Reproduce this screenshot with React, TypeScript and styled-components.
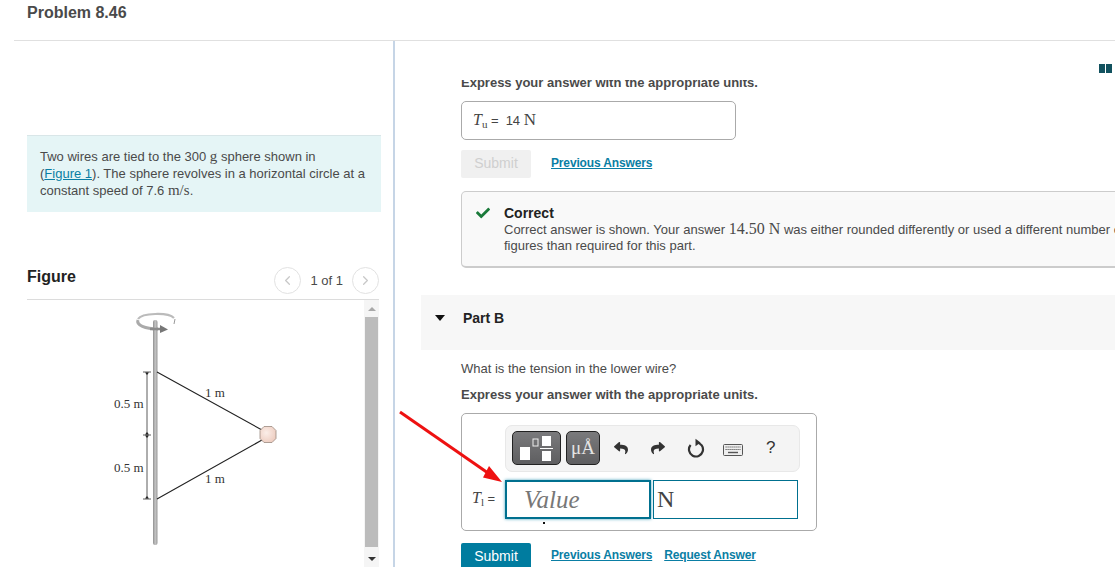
import React from 'react';
import styled, { createGlobalStyle } from 'styled-components';
import { FaCheck, FaReply, FaShare } from 'react-icons/fa';
import { ChevronLeft, ChevronRight } from 'lucide-react';

const Global = createGlobalStyle`
  html, body { margin: 0; padding: 0; height: 100%; background: #fff; overflow: hidden; }
  body { font-family: "Liberation Sans", Arial, sans-serif; color: #333; }
  #root { height: 100%; }
`;

const Page = styled.div`
  position: relative; width: 1115px; height: 567px; overflow: hidden; display: flex; flex-direction: column;
`;
const Header = styled.header`
  height: 40px; margin-left: 14px; padding-left: 13px; border-bottom: 1px solid #e0e0e0; flex: none;
`;
const Title = styled.h1`
  margin: 0; padding-top: 4px; font-size: 16px; line-height: 18px; font-weight: 700; color: #4a4a4a;
`;
const Body = styled.div`
  flex: 1; min-height: 0; display: grid; grid-template-columns: 395px 1fr;
`;
const Left = styled.section`
  border-right: 2px solid #c6d5e6; padding: 94px 13px 0 27px; display: flex; flex-direction: column; min-height: 0; overflow: hidden;
`;
const Statement = styled.div`
  background: #e5f5f6; border-top: 1px solid #d9e6e8; height: 77px; width: 354px; box-sizing: border-box; margin-right: -2px;
  padding: 12px 13px 0; font-size: 13px; line-height: 16.7px; color: #4a4a4a; flex: none;
`;
const Mathy = styled.span`
  font-family: "Liberation Serif", serif; font-size: ${p => p.$size || 15}px;
`;
const Ital = styled.i`
  font-family: "Liberation Serif", serif; font-size: ${p => p.$size || 16}px;
`;
const Sub = styled.sub`
  font-family: "Liberation Serif", serif; font-size: 11px; line-height: 0; vertical-align: -3px;
`;
const Link = styled.a`
  color: #0a7ea4; text-decoration: underline;
`;
const FigureHead = styled.div`
  display: flex; align-items: center; justify-content: space-between; height: 33px; margin-top: 54px; flex: none;
  border-bottom: 1px solid #dcdcdc; width: 352px;
`;
const FigureTitle = styled.h2`
  margin: -11px 0 0; font-size: 16px; font-weight: 700; color: #222;
`;
const Pager = styled.div`
  display: flex; align-items: center; gap: 9px; font-size: 13px; color: #4a4a4a; margin-top: -5px;
`;
const PagerButton = styled.span`
  width: 25px; height: 25px; border: 1px solid #e2e2e2; border-radius: 50%; display: flex; align-items: center; justify-content: center; color: #c8c8c8;
`;
const FigureArea = styled.div`
  flex: 1; min-height: 0; display: flex; width: 352px;
`;
const FigureCanvas = styled.svg`
  width: 337px; height: 267px; flex: none; display: block;
`;
const Scrollbar = styled.div`
  width: 15px; background: #f5f5f5; display: flex; flex-direction: column; align-items: center; flex: none;
`;
const ScrollArrow = styled.span`
  height: 17px; flex: none; display: flex; align-items: center; justify-content: center;
  &::before {
    content: ""; width: 0; height: 0; border-left: 4px solid transparent; border-right: 4px solid transparent;
    ${p => p.$down ? 'border-top: 4px solid #333;' : 'border-bottom: 4px solid #a8a8a8;'}
  }
`;
const ScrollThumb = styled.div`
  flex: 1; width: 13px; background: #bcbcbc; margin-bottom: 3px;
`;
const Right = styled.section`
  min-width: 0; display: flex; flex-direction: column; overflow: hidden;
`;
const TopStrip = styled.div`
  height: 39px; flex: none; display: flex; justify-content: flex-end; align-items: flex-start; padding: 23px 3px 0 0; box-sizing: border-box;
`;
const Scroller = styled.div`
  flex: 1; min-height: 0; overflow: hidden; padding-left: 26px;
`;
const Hint = styled.p`
  margin: ${p => p.$clipped ? '-5px' : '10px'} 0 0 40px; font-size: 13px; font-weight: 700; line-height: 16px; color: #4a4a4a;
`;
const Question = styled.p`
  margin: 11px 0 0 40px; font-size: 13px; line-height: 16px; color: #4a4a4a;
`;
const AnswerBox = styled.div`
  margin: 10px 0 0 40px; width: 275px; height: 39px; box-sizing: border-box; border: 1px solid #aaa; border-radius: 5px;
  display: flex; align-items: center; gap: 7px; padding: 0 0 2px 11px; font-size: 13px; color: #444;
`;
const Actions = styled.div`
  display: flex; align-items: flex-start; gap: 20px; margin: ${p => p.$mt}px 0 0 40px;
`;
const LinkRow = styled.div`
  display: flex; gap: 12px; padding-top: ${p => p.$pt}px; font-size: 12px; letter-spacing: -0.15px; font-weight: 700; line-height: 16px;
`;
const SubmitButton = styled.button`
  width: 70px; height: 28px; border: 0; border-radius: 2px; padding: 0 0 2px; font: 14px "Liberation Sans", Arial, sans-serif;
  background: ${p => p.disabled ? '#f0f0f0' : '#007c9f'}; color: ${p => p.disabled ? '#cfcfcf' : '#fff'};
`;
const Feedback = styled.div`
  margin: 13px 0 0 40px; width: 780px; height: 77px; box-sizing: border-box; background: #f9f9f9;
  border: 1px solid #ccc; border-bottom-width: 2px; border-radius: 5px; display: flex; gap: 14px; padding: 13px 0 0 14px;
`;
const FeedbackBody = styled.div`
  width: 700px; font-size: 13px; line-height: 16px; color: #4a4a4a;
`;
const FeedbackTitle = styled.div`
  font-weight: 700; font-size: 14px; color: #222;
`;
const PartHeader = styled.div`
  margin-top: 27px; height: 55px; background: #f7f7f7; display: flex; align-items: center; gap: 18px; padding: 0 0 9px 14px; box-sizing: border-box;
  font-size: 14px; font-weight: 700; color: #222;
`;
const Caret = styled.span`
  width: 0; height: 0; border-left: 5.5px solid transparent; border-right: 5.5px solid transparent; border-top: 6px solid #111;
`;
const Editor = styled.div`
  position: relative; margin: 10px 0 0 40px; width: 356px; height: 118px; box-sizing: border-box; border: 1px solid #aaa; border-radius: 5px;
  padding: 11px 17px 0 43px;
`;
const Toolbar = styled.div`
  height: 47px; width: 295px; box-sizing: border-box; background: #f4f4f4; border: 1px solid #e8e8e8; border-radius: 7px;
  display: flex; align-items: center; padding: 0 0 1px 6px;
`;
const TemplateButton = styled.span`
  width: ${p => p.$w}px; height: 34px; box-sizing: border-box; margin-right: 5px; border: 1px solid #222; border-radius: 5px;
  background: linear-gradient(#7a7a7c, #5e5e60); display: flex; align-items: center; justify-content: center; flex: none;
  color: #e4e4e4; font-family: "Liberation Serif", serif; font-size: 19px;
`;
const ToolGroup = styled.div`
  display: flex; align-items: center; margin-left: -3px;
`;
const ToolIcon = styled.span`
  width: 37.5px; display: flex; justify-content: center; align-items: center; color: #333; flex: none; font-size: 17px;
`;
const KeyboardWrap = styled(ToolIcon)`
  padding-top: 3px;
`;
const InputRow = styled.div`
  display: flex; align-items: center; margin: 8px 0 0 -33px; color: #444; font-size: 13px;
`;
const VarLabel = styled.span`
  width: 33px; flex: none; white-space: nowrap; margin-top: -3px;
`;
const ValueField = styled.div`
  width: 146px; height: 39px; box-sizing: border-box; border: 2px solid #00708f; box-shadow: 0 0 3px #4aa3bd; flex: none;
  padding-left: 17px; font: italic 25px/36px "Liberation Serif", serif; color: #777;
`;
const UnitField = styled.div`
  width: 145px; height: 39px; box-sizing: border-box; border: 1px solid #00708f; margin-left: 2px; flex: none;
  padding-left: 3px; font: 24px/37px "Liberation Serif", serif; color: #444;
`;
const Dot = styled.span`
  position: absolute; left: 81px; top: 108px; width: 2px; height: 2px; background: #111;
`;
const ArrowOverlay = styled.svg`
  position: absolute; left: 395px; top: 405px; width: 115px; height: 90px; pointer-events: none;
`;
const BookIcon = styled.svg`
  width: 13px; height: 9px; display: block;
`;

const Figure = () => (
  <FigureCanvas viewBox="27 300 337 267">
    <defs>
      <linearGradient id="pole" x1="0" x2="1" y1="0" y2="0">
        <stop offset="0" stopColor="#8f8f8f" /><stop offset="0.5" stopColor="#c4c4c4" /><stop offset="1" stopColor="#9a9a9a" />
      </linearGradient>
      <radialGradient id="ball" cx="0.4" cy="0.4" r="0.7">
        <stop offset="0" stopColor="#fbeee8" /><stop offset="1" stopColor="#eccabd" />
      </radialGradient>
    </defs>
    <path d="M138 319 C142 313 168 312 174 318" fill="none" stroke="#bbb" strokeWidth="2.2" />
    <path d="M138 320 C136 325 145 329 158 329" fill="none" stroke="#aaa" strokeWidth="3" />
    <rect x="153" y="320" width="4.5" height="225" rx="2" fill="url(#pole)" />
    <path d="M150 329 L161 329" stroke="#8a8a8a" strokeWidth="2.5" />
    <path d="M160 325 L168 329.5 L160 333 Z" fill="#777" />
    <path d="M175 319 L174 324" stroke="#999" strokeWidth="1" />
    <path d="M147 372 V499" stroke="#333" strokeWidth="0.8" />
    <path d="M143 372 H151 M143 435 H151 M143 499 H151" stroke="#333" strokeWidth="0.8" />
    <path d="M145 372.5 H149 L147 375 Z M145 434.5 H149 L147 432 Z M145 435.5 H149 L147 438 Z M145 498.5 H149 L147 496 Z" fill="#222" />
    <path d="M157 372 L262 430 M157 499 L262 440" stroke="#222" strokeWidth="1.1" />
    <path d="M264 426.5 H272 L276 430.5 V438.5 L272 442.5 H264 L260 438.5 V430.5 Z" fill="url(#ball)" stroke="#9a8a80" strokeWidth="0.8" />
    <g fontFamily="Liberation Serif, serif" fontSize="13" fill="#333">
      <text x="114" y="408">0.5 m</text>
      <text x="114" y="472">0.5 m</text>
      <text x="205" y="397">1 m</text>
      <text x="205" y="483">1 m</text>
    </g>
  </FigureCanvas>
);

const FractionGlyph = () => (
  <svg width="33" height="25" viewBox="0 0 33 25">
    <rect x="0" y="11" width="10" height="13" fill="#fff" />
    <rect x="13" y="3" width="5" height="7" fill="none" stroke="#eee" strokeWidth="1" />
    <rect x="22" y="0" width="9" height="10" fill="#fff" />
    <rect x="20" y="12" width="13" height="1" fill="#fff" />
    <rect x="22" y="15" width="9" height="10" fill="#fff" />
  </svg>
);

const KeyboardGlyph = () => (
  <svg width="20" height="12" viewBox="0 0 20 12">
    <rect x="0.5" y="0.5" width="19" height="11" rx="1" fill="#eee" stroke="#555" />
    <path d="M2.5 3 H17.5 M2.5 5.5 H17.5" stroke="#555" strokeWidth="1.2" strokeDasharray="1.2 0.8" />
    <path d="M5 8.5 H15" stroke="#555" strokeWidth="1.4" />
  </svg>
);

const ResetGlyph = () => (
  <svg width="20" height="20" viewBox="0 0 20 20">
    <path d="M4.6 7 A7 7 0 1 0 10.5 4.5" fill="none" stroke="#333" strokeWidth="2.2" />
    <path d="M9.5 0.8 L14.5 4.5 L9.5 8.2 Z" fill="#333" />
  </svg>
);

export default function App() {
  return (
    <Page>
      <Global />
      <Header><Title>Problem 8.46</Title></Header>
      <Body>
        <Left>
          <Statement>
            Two wires are tied to the 300 <Mathy>g</Mathy> sphere shown in<br />
            (<Link>Figure 1</Link>). The sphere revolves in a horizontal circle at a<br />
            constant speed of 7.6 <Mathy>m/s</Mathy>.
          </Statement>
          <FigureHead>
            <FigureTitle>Figure</FigureTitle>
            <Pager>
              <PagerButton><ChevronLeft size={15} strokeWidth={2} /></PagerButton>
              <span>1 of 1</span>
              <PagerButton><ChevronRight size={15} strokeWidth={2} /></PagerButton>
            </Pager>
          </FigureHead>
          <FigureArea>
            <Figure />
            <Scrollbar>
              <ScrollArrow />
              <ScrollThumb />
              <ScrollArrow $down />
            </Scrollbar>
          </FigureArea>
        </Left>
        <Right>
          <TopStrip>
            <BookIcon viewBox="0 0 13 9">
              <path d="M0 0 H6 V9 H0 Z M7 0 H13 V9 H7 Z" fill="#12525f" />
            </BookIcon>
          </TopStrip>
          <Scroller>
            <Hint $clipped>Express your answer with the appropriate units.</Hint>
            <AnswerBox>
              <span><Ital>T</Ital><Sub>u</Sub> = </span>
              <span>14 <Mathy $size={17}>N</Mathy></span>
            </AnswerBox>
            <Actions $mt={10}>
              <SubmitButton disabled>Submit</SubmitButton>
              <LinkRow $pt={5}><Link>Previous Answers</Link></LinkRow>
            </Actions>
            <Feedback>
              <FaCheck size={14} color="#1a7a3a" style={{ flex: 'none', marginTop: 1 }} />
              <FeedbackBody>
                <FeedbackTitle>Correct</FeedbackTitle>
                Correct answer is shown. Your answer <Mathy $size={16}>14.50 N</Mathy> was either rounded differently or used a different number of significant figures than required for this part.
              </FeedbackBody>
            </Feedback>
            <PartHeader><Caret />Part B</PartHeader>
            <Question>What is the tension in the lower wire?</Question>
            <Hint>Express your answer with the appropriate units.</Hint>
            <Editor>
              <Toolbar>
                <TemplateButton $w={49}><FractionGlyph /></TemplateButton>
                <TemplateButton $w={34}>μÅ</TemplateButton>
                <ToolGroup>
                  <ToolIcon><FaReply size={14} /></ToolIcon>
                  <ToolIcon><FaShare size={14} /></ToolIcon>
                  <ToolIcon><ResetGlyph /></ToolIcon>
                  <KeyboardWrap><KeyboardGlyph /></KeyboardWrap>
                  <ToolIcon>?</ToolIcon>
                </ToolGroup>
              </Toolbar>
              <InputRow>
                <VarLabel><Ital>T</Ital><Sub>l</Sub> = </VarLabel>
                <ValueField>Value</ValueField>
                <UnitField>N</UnitField>
              </InputRow>
              <Dot />
            </Editor>
            <Actions $mt={12}>
              <SubmitButton>Submit</SubmitButton>
              <LinkRow $pt={4}><Link>Previous Answers</Link><Link>Request Answer</Link></LinkRow>
            </Actions>
          </Scroller>
        </Right>
      </Body>
      <ArrowOverlay viewBox="395 405 115 90">
        <path d="M400 412 L488 473" stroke="#ee1111" strokeWidth="3" />
        <path d="M502 482 L483 477.5 L489 466 Z" fill="#ee1111" />
      </ArrowOverlay>
    </Page>
  );
}
